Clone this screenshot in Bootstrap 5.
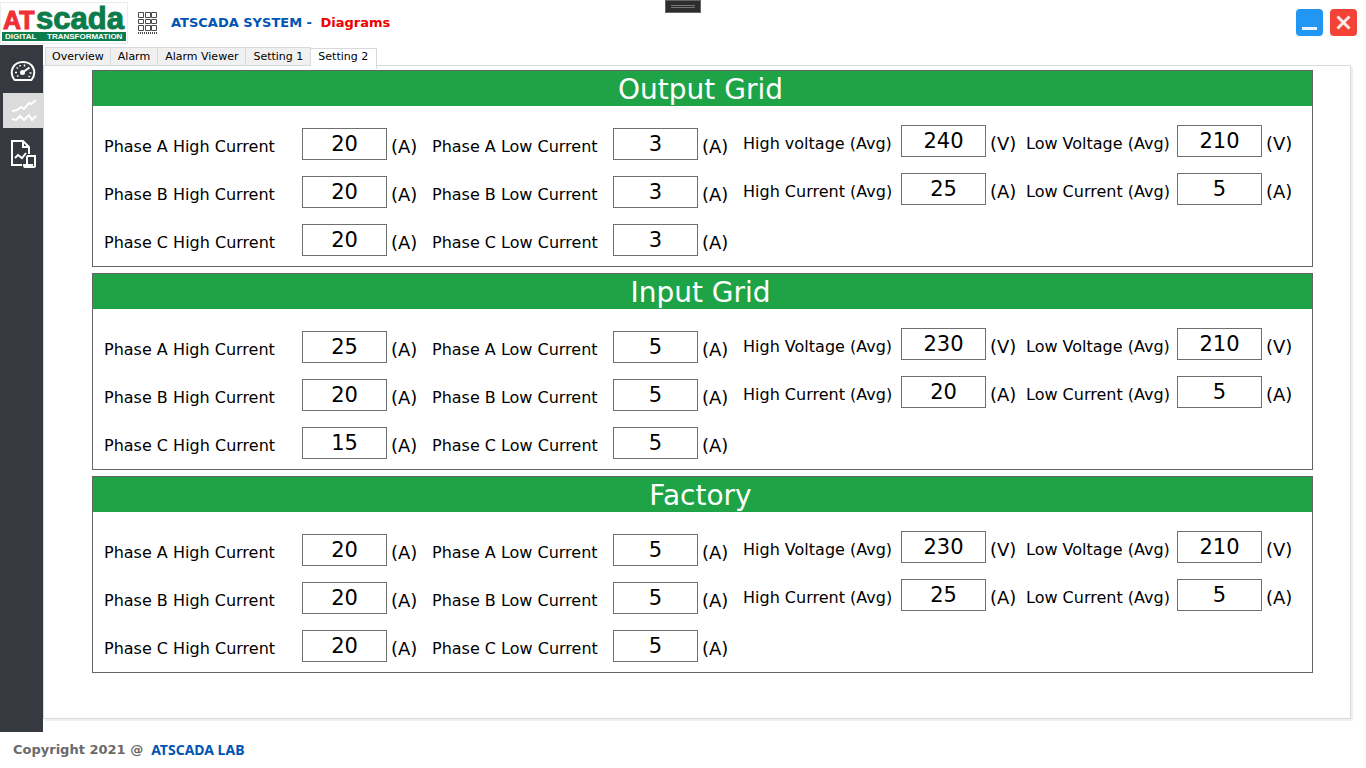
<!DOCTYPE html>
<html lang="en">
<head>
<meta charset="utf-8">
<meta name="viewport" content="width=device-width, initial-scale=1">
<title>ATSCADA SYSTEM - Diagrams</title>
<link href="https://cdn.jsdelivr.net/npm/bootstrap@5.3.0/dist/css/bootstrap.min.css" rel="stylesheet">
<style>
body{font-family:"DejaVu Sans",Verdana,sans-serif;font-size:16px;line-height:20px;color:#000;background:#fff}
.app-top{height:45px}
.brand-box{width:128px;height:42px;border:1px solid #ececec}
.app-title{font-size:13px;font-weight:700;color:#0054b4}
.app-title .crumb{color:#f00000}
.app-grid{margin:0 11px 0 8px}
.win-set{gap:7px;padding-right:9px}
.win-btn{width:27px;height:27px;border-radius:4px;border:0;padding:0;display:block}
.win-min{background:#2196f3}
.win-close{background:#f44336}
.grip{left:0;right:0;margin:0 auto;width:36px;height:13px;background:#2d2d30;border:1px solid #666}
.grip::before{content:"";width:24px;height:3px;border:solid #777;border-width:1px 0}
.side{width:43px;background:#363940;padding-top:8px}
.side a{height:35px;display:flex;align-items:center;justify-content:center;margin-left:3px;margin-bottom:5px}
.side a.current{background:#dbdbdb}
.work{padding:0 15px 13px 0}
.tabs{height:21px;padding-left:2px;margin-bottom:-1px;z-index:1}
.tabs button{font-size:11px;line-height:14px;height:19px;padding:2px 7px 1px 7px;border:1px solid #d9d9d9;border-left-width:0;background:#f0f0f0;color:#000}
.tabs li:first-child button{border-left-width:1px;padding:2px 6px 1px}
.tabs button.active{height:21px;padding:1px 8px 4px 7px;background:#fff;border-bottom-color:#fff}
.pane{border:1px solid #d9d9d9;box-shadow:2px 2px 0 #f0f0f0;padding:4px 37px 12px 48px}
.panels{gap:6px}
.panel{border:1px solid #646464}
.panel h2{height:35px;margin:0;font-size:28px;line-height:38px;font-weight:400;color:#fff;background:#1ea446;text-align:center;padding-right:4px}
.fields{display:grid;grid-template-columns:328fr 311fr 283fr 286fr;padding:19px 0 10px 11px}
.stack{display:flex;flex-direction:column;gap:16px;min-width:0}
.phase{padding-top:3px}
.field{display:flex;align-items:center;height:32px}
.field label{flex:1;white-space:nowrap;min-width:0;padding-top:6px}
.field input{width:85px;height:32px;border:1px solid #707070;border-radius:0;padding:0;text-align:center;font-size:21px;line-height:28px;color:#000;background:#fff}
.field span{width:45px;padding-left:4px;font-size:18px;line-height:24px;padding-top:6px}
.avg .field span{width:40px}
.avg.last .field span{width:50px}
.foot{height:36px;padding-left:13px;font-size:13px;font-weight:700;color:#6a6a6a}
.foot a{font-family:"Noto Sans",sans-serif;font-size:14px;color:#0054b4;text-decoration:none}
</style>
</head>
<body class="d-flex flex-column min-vh-100">
<header class="app-top d-flex align-items-center position-relative">
  <a href="#" class="brand-box d-block" aria-label="ATSCADA">
    <svg class="d-block" width="126" height="40" viewBox="1 3 126 40" font-family="Liberation Sans, Arial, sans-serif" font-weight="700">
      <text x="3" y="29" font-size="25" fill="#ee2f37" stroke="#ee2f37">AT</text>
      <text x="36" y="29" font-size="31" fill="#0c7c4a" stroke="#0c7c4a">scada</text>
      <rect x="2" y="32" width="124" height="9" fill="#0c7c4a"/>
      <g font-size="8" fill="#fff"><text x="5" y="39">DIGITAL</text><text x="47" y="39">TRANSFORMATION</text></g>
    </svg>
  </a>
  <svg class="app-grid" width="24" height="24" viewBox="0 0 24 24" fill="none" stroke="#4a4a4a" aria-hidden="true">
    <path d="M2.500 1.500h5v5h-5zM9.500 1.500h5v5h-5zM15.500 1.500h5v5h-5zM2.500 8.500h5v4h-5zM9.500 8.500h5v4h-5zM15.500 8.500h5v4h-5zM2.500 14.500h5v5h-5zM9.500 14.500h5v5h-5zM15.500 14.500h5v5h-5z"/>
    <path d="M2 22h19" stroke-width="2" stroke-dasharray="1 1"/>
  </svg>
  <div class="app-title">ATSCADA SYSTEM - <span class="crumb ms-1">Diagrams</span></div>
  <div class="grip position-absolute top-0 d-flex align-items-center justify-content-center"></div>
  <div class="win-set ms-auto d-flex">
    <button class="win-btn win-min" type="button" aria-label="Minimize"><svg width="27" height="27" class="d-block"><path d="M6 19.500h15" stroke="#e9f4fe" stroke-width="3"/></svg></button>
    <button class="win-btn win-close" type="button" aria-label="Close"><svg width="27" height="27" class="d-block"><path d="M7.500 7.500l12 12m0-12l-12 12" stroke="#fdecea" stroke-width="3"/></svg></button>
  </div>
</header>

<div class="d-flex flex-grow-1">
  <nav class="side flex-shrink-0">
    <a href="#" aria-label="Dashboard"><svg width="26" height="26" viewBox="0 0 26 26" fill="none" stroke="#fff" stroke-width="2"><path d="M4.500 22C-1.500 14 3 4 13 4s14.500 10 8.500 18z" stroke-linejoin="round"/><path d="M5 14.500h2M6.500 9.500l1.500 1M10 7v1.500M14.500 6.500v2M19.500 15h2M7 18.500l1.500-1M18.500 18l1.500 1" stroke-width="1.500"/><path d="M12.500 14.500l7-5"/><circle cx="12.500" cy="14.500" r="1.500" fill="#fff"/></svg></a>
    <a href="#" class="current" aria-label="Diagrams"><svg width="27" height="26" viewBox="0 0 27 26" fill="none" stroke="#fff" stroke-width="2"><path d="M2 13l5-1 4-3 3 2 5-6 2 1 5-4M2 21l4 1 4-4 4 4 5-5 3 5 4-4"/></svg></a>
    <a href="#" aria-label="Reports" class="mt-2"><svg width="28" height="30" viewBox="0 0 28 30" fill="none" stroke="#fff" stroke-width="2"><path d="M13 26H3V2h11l6 6v7M14 2v6h6M6 19l3-3 4 3 4-5"/><path d="M18 17h8v10q0 1-2 1h-8q-1 0-1-2h3V17M18 26h5v2"/></svg></a>
  </nav>

  <main class="work flex-grow-1 d-flex flex-column">
    <ul class="tabs list-unstyled d-flex align-items-end position-relative" role="tablist">
      <li><button type="button" role="tab">Overview</button></li>
      <li><button type="button" role="tab">Alarm</button></li>
      <li><button type="button" role="tab">Alarm Viewer</button></li>
      <li><button type="button" role="tab">Setting 1</button></li>
      <li class="align-self-start"><button type="button" role="tab" class="active" aria-selected="true">Setting 2</button></li>
    </ul>
    <div class="pane flex-grow-1">
      <div class="panels d-flex flex-column">
        <section class="panel">
          <h2>Output Grid</h2>
          <div class="fields">
            <div class="stack phase">
              <div class="field"><label for="oha">Phase A High Current</label><input id="oha" value="20"><span>(A)</span></div>
              <div class="field"><label for="ohb">Phase B High Current</label><input id="ohb" value="20"><span>(A)</span></div>
              <div class="field"><label for="ohc">Phase C High Current</label><input id="ohc" value="20"><span>(A)</span></div>
            </div>
            <div class="stack phase">
              <div class="field"><label for="ola">Phase A Low Current</label><input id="ola" value="3"><span>(A)</span></div>
              <div class="field"><label for="olb">Phase B Low Current</label><input id="olb" value="3"><span>(A)</span></div>
              <div class="field"><label for="olc">Phase C Low Current</label><input id="olc" value="3"><span>(A)</span></div>
            </div>
            <div class="stack avg">
              <div class="field"><label for="ohv">High voltage (Avg)</label><input id="ohv" value="240"><span>(V)</span></div>
              <div class="field"><label for="ohi">High Current (Avg)</label><input id="ohi" value="25"><span>(A)</span></div>
            </div>
            <div class="stack avg last">
              <div class="field"><label for="olv">Low Voltage (Avg)</label><input id="olv" value="210"><span>(V)</span></div>
              <div class="field"><label for="oli">Low Current (Avg)</label><input id="oli" value="5"><span>(A)</span></div>
            </div>
          </div>
        </section>
        <section class="panel">
          <h2>Input Grid</h2>
          <div class="fields">
            <div class="stack phase">
              <div class="field"><label for="iha">Phase A High Current</label><input id="iha" value="25"><span>(A)</span></div>
              <div class="field"><label for="ihb">Phase B High Current</label><input id="ihb" value="20"><span>(A)</span></div>
              <div class="field"><label for="ihc">Phase C High Current</label><input id="ihc" value="15"><span>(A)</span></div>
            </div>
            <div class="stack phase">
              <div class="field"><label for="ila">Phase A Low Current</label><input id="ila" value="5"><span>(A)</span></div>
              <div class="field"><label for="ilb">Phase B Low Current</label><input id="ilb" value="5"><span>(A)</span></div>
              <div class="field"><label for="ilc">Phase C Low Current</label><input id="ilc" value="5"><span>(A)</span></div>
            </div>
            <div class="stack avg">
              <div class="field"><label for="ihv">High Voltage (Avg)</label><input id="ihv" value="230"><span>(V)</span></div>
              <div class="field"><label for="ihi">High Current (Avg)</label><input id="ihi" value="20"><span>(A)</span></div>
            </div>
            <div class="stack avg last">
              <div class="field"><label for="ilv">Low Voltage (Avg)</label><input id="ilv" value="210"><span>(V)</span></div>
              <div class="field"><label for="ili">Low Current (Avg)</label><input id="ili" value="5"><span>(A)</span></div>
            </div>
          </div>
        </section>
        <section class="panel">
          <h2>Factory</h2>
          <div class="fields">
            <div class="stack phase">
              <div class="field"><label for="fha">Phase A High Current</label><input id="fha" value="20"><span>(A)</span></div>
              <div class="field"><label for="fhb">Phase B High Current</label><input id="fhb" value="20"><span>(A)</span></div>
              <div class="field"><label for="fhc">Phase C High Current</label><input id="fhc" value="20"><span>(A)</span></div>
            </div>
            <div class="stack phase">
              <div class="field"><label for="fla">Phase A Low Current</label><input id="fla" value="5"><span>(A)</span></div>
              <div class="field"><label for="flb">Phase B Low Current</label><input id="flb" value="5"><span>(A)</span></div>
              <div class="field"><label for="flc">Phase C Low Current</label><input id="flc" value="5"><span>(A)</span></div>
            </div>
            <div class="stack avg">
              <div class="field"><label for="fhv">High Voltage (Avg)</label><input id="fhv" value="230"><span>(V)</span></div>
              <div class="field"><label for="fhi">High Current (Avg)</label><input id="fhi" value="25"><span>(A)</span></div>
            </div>
            <div class="stack avg last">
              <div class="field"><label for="flv">Low Voltage (Avg)</label><input id="flv" value="210"><span>(V)</span></div>
              <div class="field"><label for="fli">Low Current (Avg)</label><input id="fli" value="5"><span>(A)</span></div>
            </div>
          </div>
        </section>
      </div>
    </div>
  </main>
</div>

<footer class="foot d-flex align-items-center">Copyright 2021 @<a class="ms-2" href="#">ATSCADA LAB</a></footer>
<script src="https://cdn.jsdelivr.net/npm/bootstrap@5.3.0/dist/js/bootstrap.bundle.min.js"></script>
</body>
</html>
